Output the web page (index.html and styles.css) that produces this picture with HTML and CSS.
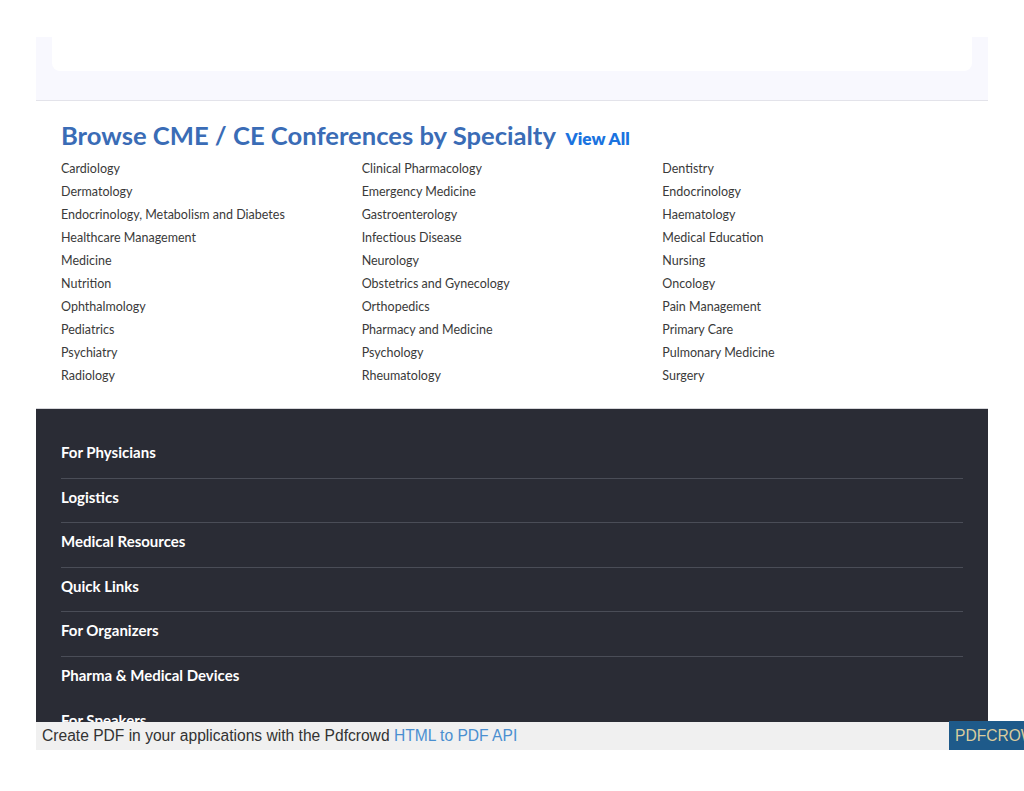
FILE: index.html
```html
<!DOCTYPE html>
<html lang="en">
<head>
<meta charset="utf-8">
<title>Browse CME / CE Conferences by Specialty</title>
<link rel="stylesheet" href="styles.css">
</head>
<body>
<div class="page">
  <div class="top-band">
    <div class="top-card"></div>
  </div>
  <section class="specialty">
    <h2 class="specialty-title">Browse CME / CE Conferences by Specialty <a class="view-all" href="#">View All</a></h2>
    <ul class="specialty-list">
      <li>Cardiology</li>
      <li>Clinical Pharmacology</li>
      <li>Dentistry</li>
      <li>Dermatology</li>
      <li>Emergency Medicine</li>
      <li>Endocrinology</li>
      <li>Endocrinology, Metabolism and Diabetes</li>
      <li>Gastroenterology</li>
      <li>Haematology</li>
      <li>Healthcare Management</li>
      <li>Infectious Disease</li>
      <li>Medical Education</li>
      <li>Medicine</li>
      <li>Neurology</li>
      <li>Nursing</li>
      <li>Nutrition</li>
      <li>Obstetrics and Gynecology</li>
      <li>Oncology</li>
      <li>Ophthalmology</li>
      <li>Orthopedics</li>
      <li>Pain Management</li>
      <li>Pediatrics</li>
      <li>Pharmacy and Medicine</li>
      <li>Primary Care</li>
      <li>Psychiatry</li>
      <li>Psychology</li>
      <li>Pulmonary Medicine</li>
      <li>Radiology</li>
      <li>Rheumatology</li>
      <li>Surgery</li>
    </ul>
  </section>
  <footer class="footer">
    <ul class="footer-list">
      <li>For Physicians</li>
      <li>Logistics</li>
      <li>Medical Resources</li>
      <li>Quick Links</li>
      <li>For Organizers</li>
      <li class="no-line">Pharma &amp; Medical Devices</li>
      <li class="no-line">For Speakers</li>
    </ul>
  </footer>
</div>
<div class="pdf-bar">Create PDF in your applications with the Pdfcrowd <a href="#">HTML to PDF API</a></div>
<div class="pdf-badge">PDFCROWD</div>
</body>
</html>
```

FILE: styles.css
```css
html, body {
  margin: 0;
  padding: 0;
  background: #ffffff;
}
body {
  font-family: Lato, "Noto Sans", sans-serif;
  width: 1024px;
  height: 791px;
  overflow: hidden;
  position: relative;
}
.page {
  margin: 37px 0 0 36px;
  width: 952px;
}
.top-band {
  background: #f8f8fe;
  height: 63px;
  padding: 0 16px;
  border-bottom: 1px solid #e3e3ea;
}
.top-card {
  background: #ffffff;
  height: 34px;
  border-radius: 0 0 8px 8px;
}
.specialty {
  padding: 18px 25px 21px;
}
.specialty-title {
  margin: 0;
  font-size: 25.6px;
  line-height: 32px;
  font-weight: 700;
  color: #3a6cb6;
}
.view-all {
  font-size: 17.2px;
  font-weight: 800;
  color: #1a73e0;
  text-decoration: none;
  margin-left: 4px;
}
.specialty-list {
  list-style: none;
  margin: 2px 0 0;
  padding: 0;
  display: grid;
  grid-template-columns: repeat(3, 1fr);
}
.specialty-list li {
  font-size: 12.5px;
  line-height: 23px;
  color: #3a3a3a;
}
.footer {
  background: #2a2c35;
  border-top: 1px solid #d6d6da;
  height: 341px;
  overflow: hidden;
  padding: 25px 25px 0;
  box-sizing: border-box;
}
.footer-list {
  list-style: none;
  margin: 0;
  padding: 0;
}
.footer-list li {
  color: #ffffff;
  font-size: 15px;
  font-weight: 700;
  line-height: 20.6px;
  padding: 8px 0 15px;
  border-bottom: 1px solid #4a4d57;
}
.footer-list li.no-line {
  border-bottom-color: transparent;
}
.pdf-bar {
  position: absolute;
  left: 36px;
  top: 722px;
  width: 913px;
  height: 28px;
  background: #f0f0f0;
  font-family: "Liberation Sans", Arial, sans-serif;
  font-size: 15.6px;
  line-height: 28px;
  color: #333333;
  padding-left: 6px;
  box-sizing: border-box;
  white-space: nowrap;
}
.pdf-bar a {
  color: #4a8fd0;
  text-decoration: none;
}
.pdf-badge {
  position: absolute;
  left: 949px;
  top: 721px;
  width: 90px;
  height: 29px;
  background: #1e5a8a;
  color: #d9cc9e;
  font-family: "Liberation Sans", Arial, sans-serif;
  font-size: 15.6px;
  line-height: 29px;
  padding-left: 6px;
  box-sizing: border-box;
  white-space: nowrap;
}
```
